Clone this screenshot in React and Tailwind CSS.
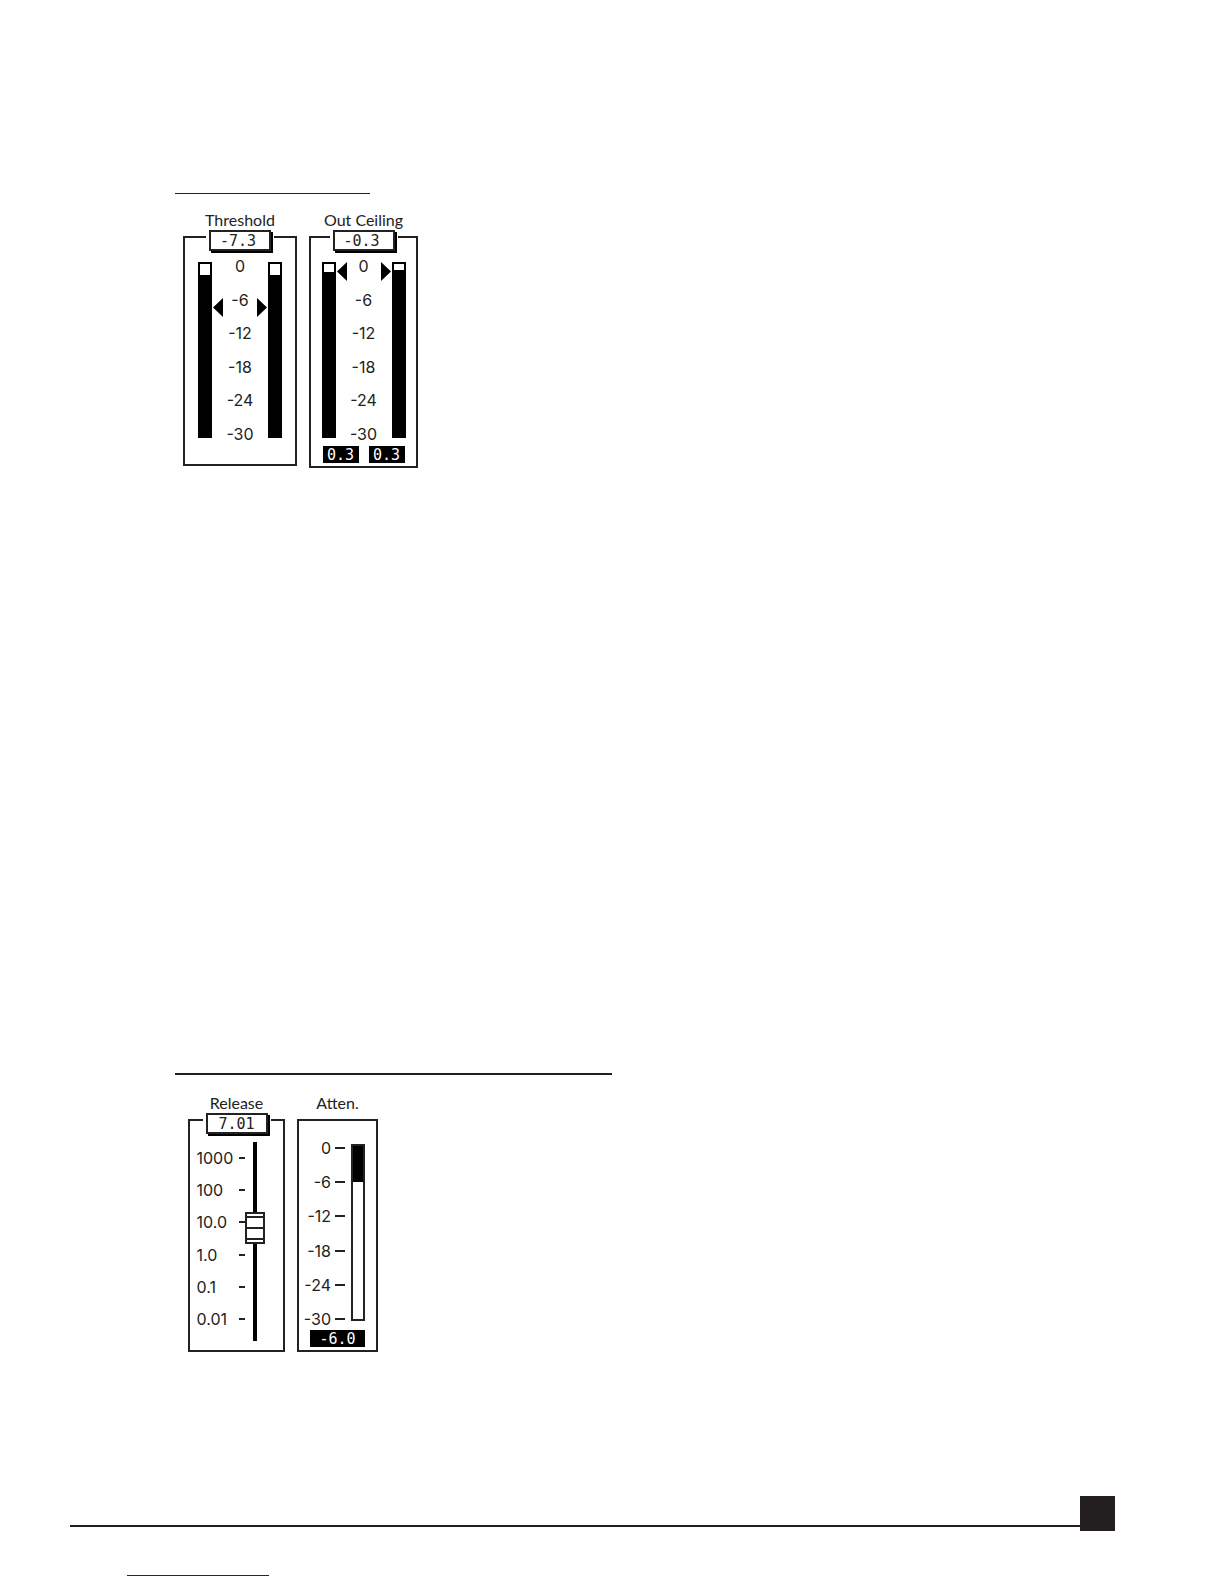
import { useState } from 'react';

const DB_MARKS = ['0', '-6', '-12', '-18', '-24', '-30'];
const RELEASE_MARKS = ['1000', '100', '10.0', '1.0', '0.1', '0.01'];

const ValueBox = ({ id, initial, className = 'pr-1' }) => {
  const [value, setValue] = useState(initial);

  return (
    <div className="relative -mt-2 bg-white px-[3px]">
      <input
        id={id}
        type="text"
        value={value}
        onChange={(e) => setValue(e.target.value)}
        className={`block h-[21px] w-[62px] border-2 border-[#222] bg-white text-center font-['DejaVu_Sans_Mono',monospace] text-[15px] leading-4 text-[#222] shadow-[2px_2px_0_#000] outline-none ${className}`}
      />
    </div>
  );
};

const Meter = ({ empty }) => (
  <div className="h-44 w-3.5 shrink-0 border-2 border-black bg-black">
    <div className="bg-white" style={{ height: empty }} />
  </div>
);

const Arrow = ({ direction, offset }) => (
  <div className="w-[11px] shrink-0" style={{ paddingTop: offset }}>
    <svg viewBox="0 0 11 19" className="block h-[19px] w-[11px]" aria-hidden="true">
      <path d={direction === 'left' ? 'M0 9.5 L10 0 V19 Z' : 'M11 9.5 L1 0 V19 Z'} fill="#000" />
    </svg>
  </div>
);

const Readout = ({ children, className }) => (
  <output
    className={`block h-[17px] bg-black text-center font-['DejaVu_Sans_Mono',monospace] text-[15px] leading-[18px] text-white ${className}`}
  >
    {children}
  </output>
);

const LevelPanel = ({ id, label, value, empty, arrowOffset, peaks, panelClass }) => (
  <div className="flex flex-col items-center">
    <label htmlFor={id} className="mb-1.5 leading-5">
      {label}
    </label>
    <div className={`flex flex-col items-center border-2 border-[#222] ${panelClass}`}>
      <ValueBox id={id} initial={value} />
      <div className="mt-[11px] flex gap-px">
        <Meter empty={empty[0]} />
        <Arrow direction="left" offset={arrowOffset} />
        <ul className="-my-1 flex w-[30px] flex-col items-center justify-between font-['Inter',sans-serif] leading-4">
          {DB_MARKS.map((mark) => (
            <li key={mark}>{mark}</li>
          ))}
        </ul>
        <Arrow direction="right" offset={arrowOffset} />
        <Meter empty={empty[1]} />
      </div>
      {peaks && (
        <div className="mt-2 flex gap-2.5">
          {peaks.map((peak, i) => (
            <Readout key={i} className="w-9">
              {peak}
            </Readout>
          ))}
        </div>
      )}
    </div>
  </div>
);

const ReleasePanel = () => {
  const [position, setPosition] = useState(58);

  return (
    <div className="flex flex-col items-center">
      <label htmlFor="release" className="mb-1.5 leading-5">
        Release
      </label>
      <div className="flex w-[97px] flex-col items-center border-2 border-[#222] pb-[9px]">
        <ValueBox id="release" initial="7.01" className="px-0" />
        <div className="mt-2 flex pr-3">
          <ul className="mt-2 mb-3.5 flex w-12 flex-col justify-between font-['Inter',sans-serif] leading-4">
            {RELEASE_MARKS.map((mark) => (
              <li key={mark} className="flex items-center justify-between">
                {mark}
                <span className="h-0.5 w-1.5 bg-[#222]" />
              </li>
            ))}
          </ul>
          <input
            type="range"
            aria-label="Release time"
            value={position}
            onChange={(e) => setPosition(Number(e.target.value))}
            className="m-0 h-[199px] w-5 appearance-none bg-[linear-gradient(#000,#000)] bg-[length:4px_100%] bg-center bg-no-repeat [direction:rtl] [writing-mode:vertical-lr] [&::-webkit-slider-thumb]:h-8 [&::-webkit-slider-thumb]:w-5 [&::-webkit-slider-thumb]:appearance-none [&::-webkit-slider-thumb]:rounded-none [&::-webkit-slider-thumb]:border-2 [&::-webkit-slider-thumb]:border-solid [&::-webkit-slider-thumb]:border-[#222] [&::-webkit-slider-thumb]:bg-[linear-gradient(#fff_2px,#222_2px,#222_4px,#fff_4px,#fff_13px,#222_13px,#222_15px,#fff_15px,#fff_24px,#222_24px,#222_26px,#fff_26px)]"
          />
        </div>
      </div>
    </div>
  );
};

const AttenPanel = () => (
  <div className="flex flex-col items-center">
    <p className="mb-1.5 leading-5">Atten.</p>
    <div className="flex w-[81px] flex-col items-end border-2 border-[#222] pt-[23px] pr-[11px] pb-[3px]">
      <div className="flex gap-1.5">
        <ul className="-mt-1 -mb-1.5 flex flex-col justify-between font-['Inter',sans-serif] leading-4">
          {DB_MARKS.map((mark) => (
            <li key={mark} className="flex items-center justify-end gap-1">
              {mark}
              <span className="h-0.5 w-2.5 bg-[#222]" />
            </li>
          ))}
        </ul>
        <div className="h-[177px] w-3.5 border-2 border-[#222]">
          <div className="h-9 bg-black" />
        </div>
      </div>
      <Readout className="mt-[9px] w-[55px]">-6.0</Readout>
    </div>
  </div>
);

export default function App() {
  return (
    <div className="flex min-h-screen flex-col bg-white font-['Lato',sans-serif] text-base text-[#222]">
      <main className="pt-[193px] pl-[175px]">
        <section>
          <hr className="w-[195px] border-t border-[#231f20]" />
          <div className="mt-4 ml-2 flex items-start gap-3">
            <LevelPanel
              id="threshold"
              label="Threshold"
              value="-7.3"
              empty={[11, 11]}
              arrowOffset={36}
              panelClass="h-[230px] w-[114px]"
            />
            <LevelPanel
              id="ceiling"
              label="Out Ceiling"
              value="-0.3"
              empty={[8, 6]}
              arrowOffset={0}
              peaks={['0.3', '0.3']}
              panelClass="h-[232px] w-[109px]"
            />
          </div>
        </section>

        <section className="mt-[605px]">
          <hr className="w-[437px] border-t-2 border-[#231f20]" />
          <div className="mt-[18px] ml-[13px] flex items-start gap-3">
            <ReleasePanel />
            <AttenPanel />
          </div>
        </section>
      </main>

      <footer className="mt-auto pr-[109px] pb-2 pl-[70px]">
        <div className="flex">
          <div className="mt-[29px] h-0.5 flex-1 bg-[#231f20]" />
          <div className="size-[35px] bg-[#231f20]" />
        </div>
        <div className="mt-11 ml-[57px] h-px w-[142px] bg-[#1a1a80]" />
      </footer>
    </div>
  );
}
